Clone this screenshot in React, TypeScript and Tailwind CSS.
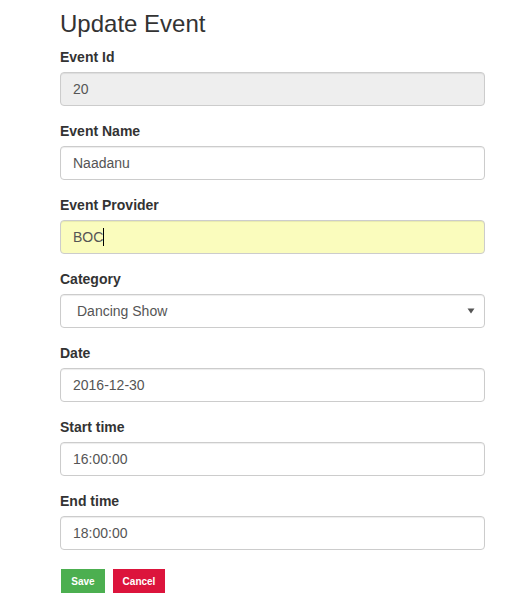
import React from 'react';

const inputBase =
    "block w-full h-[34px] px-3 py-[6px] text-[14px] leading-[20px] text-[#555] border border-[#ccc] rounded-[4px] shadow-[inset_0_1px_1px_rgba(0,0,0,0.075)] outline-none";

const Field: React.FC<{ label: string; children: React.ReactNode }> = ({ label, children }) => (
    <div className="mb-[15px]">
        <label className="block mb-[5px] text-[14px] leading-[20px] font-bold text-[#333]">{label}</label>
        {children}
    </div>
);

export default function App() {
    return (
        <div className="w-[528px] h-[613px] bg-white font-['Liberation_Sans',Arial,sans-serif] text-[#333]">
            <div className="ml-[60px] w-[425px] pt-[10px]">
                <h3 className="text-[24px] leading-[27px] font-normal text-[#333] mb-[10px]">Update Event</h3>

                <Field label="Event Id">
                    <input className={`${inputBase} bg-[#eee]`} value="20" disabled readOnly />
                </Field>

                <Field label="Event Name">
                    <input className={`${inputBase} bg-white`} value="Naadanu" readOnly />
                </Field>

                <Field label="Event Provider">
                    <div className={`${inputBase} bg-[#fafcbd] border-[#66afe9] shadow-[inset_0_1px_1px_rgba(0,0,0,0.075),0_0_8px_rgba(102,175,233,0.6)] flex items-center`}>
                        <span>BOC</span>
                        <span className="inline-block w-px h-[18px] bg-black" />
                    </div>
                </Field>

                <Field label="Category">
                    <div className={`${inputBase} bg-white flex items-center justify-between pl-4 pr-[8px]`}>
                        <span>Dancing Show</span>
                        <svg width="8" height="6" viewBox="0 0 8 6" className="mr-[1px]">
                            <path d="M0.5 0.5 L7.5 0.5 L4 5.5 Z" fill="#555" />
                        </svg>
                    </div>
                </Field>

                <Field label="Date">
                    <input className={`${inputBase} bg-white`} value="2016-12-30" readOnly />
                </Field>

                <Field label="Start time">
                    <input className={`${inputBase} bg-white`} value="16:00:00" readOnly />
                </Field>

                <Field label="End time">
                    <input className={`${inputBase} bg-white`} value="18:00:00" readOnly />
                </Field>

                <div className="flex gap-2 pt-[4px] pl-px">
                    <button className="w-[44px] h-[24px] bg-[#4caf50] text-white text-[10px] font-bold">Save</button>
                    <button className="w-[52px] h-[24px] bg-[#dc143c] text-white text-[10px] font-bold">Cancel</button>
                </div>
            </div>
        </div>
    );
}
